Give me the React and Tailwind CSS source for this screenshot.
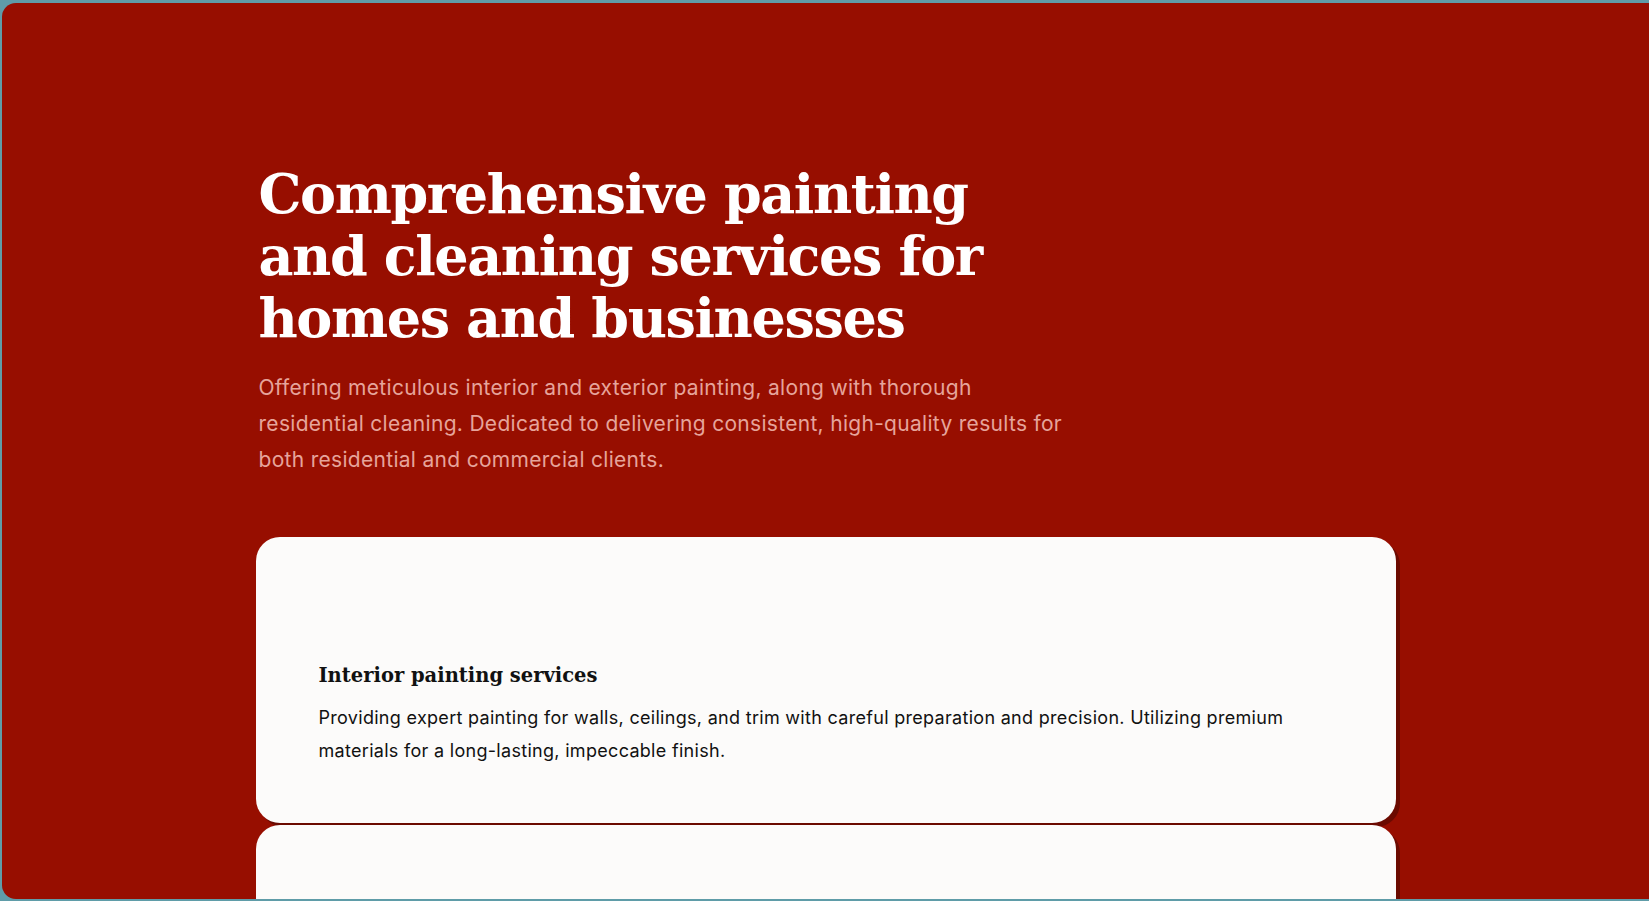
import React from 'react'

const services = [
  {
    title: 'Interior painting services',
    text: 'Providing expert painting for walls, ceilings, and trim with careful preparation and precision. Utilizing premium materials for a long-lasting, impeccable finish.',
  },
  {
    title: 'Exterior painting services',
    text: 'Protecting and refreshing siding, decks, fences and facades with durable coatings built to withstand the weather.',
  },
]

export default function App() {
  return (
    <div className="h-screen overflow-hidden bg-[#5f9ca8] pt-[3px] pb-[2px] pl-[2px]">
      <div className="h-full overflow-hidden rounded-l-[14px] bg-[#970e00]">
        <div className="mx-auto w-[1140px] pt-[160px]">
          <h1 className="max-w-[760px] pl-[3px] font-['DejaVu_Serif',serif] text-[54px] leading-[62px] font-bold tracking-[-1.4px] text-white">
            Comprehensive painting and cleaning services for homes and businesses
          </h1>
          <p className="mt-[21px] max-w-[822px] pl-[3px] font-['Inter',sans-serif] text-[21px] leading-[36px] tracking-[0.3px] text-[#e6a49b]">
            Offering meticulous interior and exterior painting, along with thorough residential cleaning. Dedicated to delivering consistent, high-quality results for both residential and commercial clients.
          </p>

          <div className="mt-[59px] flex flex-col gap-[2px]">
            {services.map((s) => (
              <div
                key={s.title}
                className="h-[286px] rounded-[24px] bg-[#fcfbfa] px-[63px] pt-[124px] shadow-[4px_4px_0_#6b0a00]"
              >
                <h3 className="font-['DejaVu_Serif',serif] text-[19.5px] leading-[30px] font-bold text-[#111]">
                  {s.title}
                </h3>
                <p className="mt-[10px] font-['Inter',sans-serif] text-[18px] leading-[33px] tracking-[0.3px] text-[#111]">
                  {s.text}
                </p>
              </div>
            ))}
          </div>
        </div>
      </div>
    </div>
  )
}
